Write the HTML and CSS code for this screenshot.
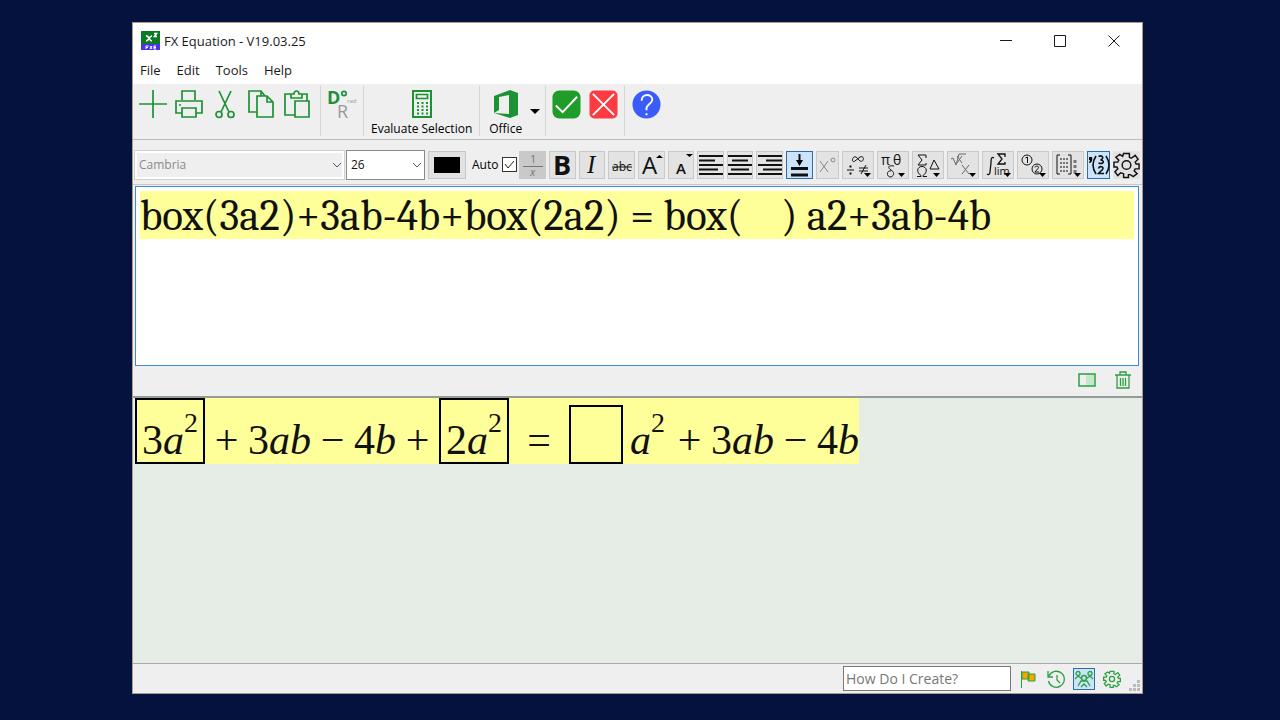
FILE: index.html
```
<!DOCTYPE html>
<html lang="en">
<head>
<meta charset="utf-8">
<title>FX Equation</title>
<link rel="stylesheet" href="styles.css">
</head>
<body>
<main class="window">
  <header class="titlebar">
    <svg class="app-icon" viewBox="0 0 19 19" aria-hidden="true"><rect width="19" height="14" fill="#0b7a24" stroke="none"/><rect y="13" width="19" height="6" fill="#4a35ee" stroke="none"/><g fill="none" stroke="#fff"><path stroke-width="1.600" d="M5 5c3-1 3 5 6 5M11 5c-3 0-3 5-6 5M13 2.500h2.500l-2 3h2.500"/><path d="M5 18v-3h2.500M5 16.500h2M9 15l2 3m0-3-2 3M15 15h-2v3h2M13 16.500h2"/></g></svg>
    <h1 class="title">FX Equation - V19.03.25</h1>
    <div class="window-controls">
      <button aria-label="Minimize"><svg viewBox="0 0 12 12"><path d="M0 5.500h12"/></svg></button>
      <button aria-label="Maximize"><svg viewBox="0 0 12 12"><path d="M.5.5h11v11H.5z"/></svg></button>
      <button aria-label="Close"><svg viewBox="0 0 12 12"><path d="m.5.5 11 11m0-11-11 11"/></svg></button>
    </div>
  </header>
  <nav class="menu"><button>File</button><button>Edit</button><button>Tools</button><button>Help</button></nav>

  <section class="toolbar" aria-label="Main toolbar">
    <div class="group files">
      <button aria-label="New"><svg class="icon" viewBox="0 0 28 28"><path d="M14 0v28M0 14h28"/></svg></button>
      <button aria-label="Print"><svg class="icon" viewBox="0 0 28 28"><path d="M7 10V1h13v9M7 23H1V11h26v12h-6M7 18h14v9H7z"/><path d="M4 15h2"/></svg></button>
      <button aria-label="Cut"><svg class="icon" viewBox="0 0 28 28"><path d="m8 1 10 21M20 1 10 22"/><circle cx="8" cy="24.500" r="3"/><circle cx="20" cy="24.500" r="3"/></svg></button>
      <button aria-label="Copy"><svg class="icon" viewBox="0 0 28 28"><path d="M10 22H2V1h12l4 5M10 6h10l6 6v15H10zM20 6v6h6M14 1v5"/></svg></button>
      <button aria-label="Paste"><svg class="icon" viewBox="0 0 28 28"><path d="M12 25H2V4h6M19 4h5v7M8 8V4h3c0-4 5-4 5 0h3v4zM12 11h14v16H12z"/></svg></button>
    </div>
    <div class="group"><button aria-label="Degrees or radians"><svg class="icon angle" viewBox="0 0 28 30"><text x="-1" y="14" font-size="18" font-weight="700">D</text><circle cx="16" cy="3.500" r="2.200"/><text x="9" y="28" font-size="18" class="grey">R</text><text x="19" y="13" font-size="6" class="grey">rad</text></svg></button></div>
    <div class="group"><button class="labelled"><svg class="icon" viewBox="0 0 28 28"><path stroke-width="2" d="M5 1h18v26H5z"/><path d="M8.500 4.500h11v4h-11z"/><path stroke-width="2" stroke-dasharray="2 2.500" d="M9 13h11M9 16.500h11M9 20h11M9 23.500h11"/></svg><span>Evaluate Selection</span></button></div>
    <div class="group office"><button class="labelled"><svg class="icon" viewBox="0 0 28 28"><path class="solid" d="M2 6 18 0l8 3v22l-8 3L2 23l15 1V5L7 7v13l-5 3z"/></svg><span>Office</span></button><button class="drop" aria-label="Office options"><svg viewBox="0 0 10 5"><path d="M0 0h10L5 5z"/></svg></button></div>
    <div class="group marks">
      <button aria-label="Accept"><svg class="badge" viewBox="0 0 30 30"><rect x=".5" y=".5" width="29" height="29" rx="7" fill="#209c2a" stroke="none"/><path d="m4 16 7 7L26 7"/></svg></button>
      <button aria-label="Cancel"><svg class="badge" viewBox="0 0 30 30"><rect x=".5" y=".5" width="29" height="29" rx="5" fill="#fc3b43" stroke="none"/><path d="m4 4 22 22M26 4 4 26"/></svg></button>
    </div>
    <div class="group"><button aria-label="Help"><svg class="badge" viewBox="0 0 30 30"><circle cx="15" cy="15" r="14.500" fill="#3c5cfa" stroke="none"/><path d="M10 11c0-8 11-7 11-1 0 4-6 5-6 9v2M15 24v2"/></svg></button></div>
  </section>

  <section class="format" aria-label="Format toolbar">
    <select class="font-name" aria-label="Font" disabled><option>Cambria</option></select>
    <select class="font-size" aria-label="Font size"><option>26</option></select>
    <button class="colour" aria-label="Text colour"><span></span></button>
    <label class="auto">Auto <input type="checkbox" checked></label>
    <div class="tools">
      <button class="pressed" aria-label="Fraction"><svg viewBox="0 0 26 28"><path d="M3 15.500h20"/><text x="10" y="12" font-size="11">1</text><text x="10" y="25" font-size="11" font-style="italic">x</text></svg></button>
      <button aria-label="Bold"><svg viewBox="0 0 26 28"><text x="4" y="24" font-size="27" font-weight="700">B</text></svg></button>
      <button aria-label="Italic"><svg viewBox="0 0 26 28"><text class="glyph-serif" x="8" y="22" font-size="25">I</text></svg></button>
      <button aria-label="Strikethrough"><svg viewBox="0 0 26 28"><text x="3" y="20" font-size="12">abc</text><path d="M3 16h20"/></svg></button>
      <button aria-label="Larger text"><svg viewBox="0 0 26 28"><text x="4" y="23" font-size="24">A</text><path class="fill" d="M18 7h7l-3.500-3z"/></svg></button>
      <button aria-label="Smaller text"><svg viewBox="0 0 26 28"><text x="8" y="23" font-size="15" font-weight="600">A</text><path class="fill" d="M18 3h7l-3.500 3z"/></svg></button>
      <button aria-label="Align left"><svg viewBox="0 0 26 28"><path class="bars" d="M1 5h24M1 9.500h16M1 14h24M1 18.500h19M1 23h24"/></svg></button>
      <button aria-label="Align centre"><svg viewBox="0 0 26 28"><path class="bars" d="M1 5h24M5 9.500h16M1 14h24M4 18.500h18M1 23h24"/></svg></button>
      <button aria-label="Align right"><svg viewBox="0 0 26 28"><path class="bars" d="M1 5h24M9 9.500h16M1 14h24M6 18.500h19M1 23h24"/></svg></button>
      <button class="active" aria-label="Baseline"><svg viewBox="0 0 26 28"><path class="heavy" d="M5 17.500h17M5 24h17"/><path stroke-width="2" d="M13.500 3v8"/><path class="fill" d="M10 9h7l-3.500 6z"/></svg></button>
      <button class="narrow" aria-label="Degree"><svg viewBox="0 0 22 28" class="faint"><path d="m4 10 8 11m0-11L4 21"/><circle cx="17" cy="9" r="2"/></svg></button>
      <button class="wide" aria-label="Operators"><svg viewBox="0 0 32 28"><path d="M16 8c-5-7-8 5-3 2l5-4c5-2 4 6 0 4zM5 19h7M17 17h9M17 20h9M24 14l-5 9"/><path stroke-width="2" d="M7.500 15.500h2M7.500 22.500h2"/><path class="fill" d="M22 22h7l-3.500 4z"/></svg></button>
      <button class="wide" aria-label="Greek lower case"><svg viewBox="0 0 32 28"><text x="4" y="14" font-size="14">π</text><text x="16" y="14" font-size="14">θ</text><path d="M17 15c-7-1-6 2-3 4 5 3 2 7-1 7-4-1-3-7 1-6"/><path class="fill" d="M21 22h7l-3.500 4z"/></svg></button>
      <button class="wide" aria-label="Greek upper case"><svg viewBox="0 0 32 28"><path d="M14 7V4H6l4 5-4 5h8v-2M5 25.500h4v-1c-5-3-4-9 1-9s6 6 1 9v1h4M22 9l-4 9h9z"/><path class="fill" d="M21 22h7l-3.500 4z"/></svg></button>
      <button class="wide" aria-label="Roots and powers"><svg viewBox="0 0 32 28" class="soft"><path d="m4 8 2-1 3 7 3-11h7M10 5l5 7m0-7-5 7M15 14l7 9m0-9-7 9"/><path class="fill" d="M22 22h7l-3.500 4z"/></svg></button>
      <button class="wide" aria-label="Calculus"><svg viewBox="0 0 32 28"><path stroke-width="1.300" d="M12 7c-3-2-3 2-3 5l-1 9c0 3-2 3-3 2M23 6V3h-7l4 5-4 5h7v-2"/><text x="12" y="24" font-size="11">lim</text><path class="fill" d="M22 22h7l-3.500 4z"/></svg></button>
      <button class="wide" aria-label="Numbering"><svg viewBox="0 0 32 28"><circle cx="10" cy="9" r="5"/><circle cx="20" cy="18" r="5"/><path d="m8.500 7 2-1v6M18 16.500c1-3 5-1 3 1l-3 3.500h4"/><path class="fill" d="M22 22h7l-3.500 4z"/></svg></button>
      <button class="wide" aria-label="Matrix"><svg viewBox="0 0 32 28"><path d="M8 4H5v19h3M16 4h3v19h-3"/><path stroke="#777" stroke-width="2" stroke-dasharray="2 2" d="M9 7v14M12 7v14M15 7v14"/><path stroke="#777" stroke-width="3" stroke-dasharray="3 2" d="M23 9v13"/><path class="fill" d="M22 22h7l-3.500 4z"/></svg></button>
      <button class="active narrow" aria-label="Inline notation"><svg viewBox="0 0 22 28"><path class="fill" d="M1 6h3c1 4-1 6-3 6l1-3H1z"/><path stroke-width="1.600" d="M8 5c-4 6-4 12 0 18M18 5c4 6 4 12 0 18"/><path stroke-width="1.600" d="M10.500 5.500c4-2 6 2 2 3.500 4 0 4 5-2 3M10.500 17.500c1-3 6-2 4 1l-4 4H16"/></svg></button>
      <button class="settings" aria-label="Settings"><svg viewBox="0 0 28 28"><path class="gear" d="M11 2h6v4l2 1 4-3 3 4-3 3 1 2h3v5h-4l-1 2 3 3-4 3-3-2h-2v3h-5v-4l-3-1-3 3-3-4 3-3-1-2H1v-5h4l1-2-3-3 4-3 3 2z"/><circle cx="14" cy="14" r="4.500" stroke-width="1.500"/></svg></button>
    </div>
  </section>

  <textarea class="editor" aria-label="Equation text" spellcheck="false">box(3a2)+3ab-4b+box(2a2) = box(    ) a2+3ab-4b</textarea>

  <div class="strip">
    <button aria-label="Toggle panel"><svg class="small" viewBox="0 0 18 18"><path fill="#c5e8c9" stroke="none" d="M8 3h8v12H8z"/><path stroke-width="1.500" d="M1 3h16v12H1z"/></svg></button>
    <button aria-label="Delete"><svg class="small" viewBox="0 0 18 18"><path stroke-width="1.300" d="M3 4h12v13H3zM1 4h16M6 4V1h6v3M6.500 7v8M9 7v8M11.500 7v8"/></svg></button>
  </div>

  <section class="output" aria-label="Equation">
    <div class="equation">
      <span class="box">3<i>a</i><sup>2</sup></span><span class="op">+</span><span>3<i>ab</i></span><span class="op">−</span><span>4<i>b</i></span><span class="op">+</span><span class="box">2<i>a</i><sup>2</sup></span><span class="op equals">=</span><span class="box empty"></span><span class="term"><i>a</i><sup>2</sup></span><span class="op">+</span><span>3<i>ab</i></span><span class="op">−</span><span>4<i>b</i></span>
    </div>
  </section>

  <footer class="status">
    <input class="search" type="text" placeholder="How Do I Create?" aria-label="How Do I Create?">
    <button aria-label="Flag"><svg class="small" viewBox="0 0 18 18"><path fill="#f6a800" d="M3 2h7v7H3zM9 4h7v7H9z"/><path d="M2.500 1v17"/></svg></button>
    <button aria-label="History"><svg class="small" viewBox="0 0 18 18"><path stroke-width="1.300" d="M2 6a8 8 0 1 1-.500 5M1 1v6h5M10 5v5l3 3"/></svg></button>
    <button class="active" aria-label="Community"><svg class="small" viewBox="0 0 18 18"><g stroke-width="1.300"><circle cx="9" cy="8" r="2.500"/><circle cx="3" cy="3.500" r="2"/><circle cx="15" cy="3.500" r="2"/><path d="m3 16 3-5h6l3 5M0 9l3-3 4 3M18 9l-3-3-4 3M6 17l3-3 3 3"/></g></svg></button>
    <button aria-label="Preferences"><svg class="small" viewBox="0 0 28 28"><path stroke-width="2" d="M11 2h6v4l2 1 4-3 3 4-3 3 1 2h3v5h-4l-1 2 3 3-4 3-3-2h-2v3h-5v-4l-3-1-3 3-3-4 3-3-1-2H1v-5h4l1-2-3-3 4-3 3 2z"/><circle cx="14" cy="14" r="4" stroke-width="2"/></svg></button>
    <svg class="grip" viewBox="0 0 11 11" aria-hidden="true"><path d="M8 0h3v3H8zM4 4h3v3H4zM8 4h3v3H8zM0 8h3v3H0zM4 8h3v3H4zM8 8h3v3H8z"/></svg>
  </footer>
</main>
</body>
</html>
```
FILE: styles.css
```
* { box-sizing: border-box; }
body {
  margin: 0;
  min-height: 100vh;
  display: flex;
  padding: 22px 137px 26px 132px;
  background: #06123e;
  color: #1a1a1a;
  font-family: "Open Sans", "Noto Sans", sans-serif;
  font-size: 13px;
}
button {
  margin: 0;
  padding: 0;
  border: 0;
  background: none;
  color: inherit;
  font: inherit;
}
svg { display: block; fill: none; stroke: currentColor; overflow: visible; }
svg text { fill: currentColor; stroke: none; }
svg .grey { fill: #999; }
.glyph-serif { font-family: "Liberation Serif", serif; font-style: italic; }

.window {
  flex: 1;
  display: flex;
  flex-direction: column;
  min-width: 0;
  border: 1px solid #a99b87;
  background: #efefef;
}
.titlebar {
  display: flex;
  align-items: center;
  height: 35px;
  padding: 0 1px 0 8px;
  background: #fff;
}
.app-icon { width: 19px; height: 19px; }
.title { flex: 1; margin: 0 0 0 4px; font-size: 13px; font-weight: 400; }
.window-controls { display: flex; }
.window-controls button { width: 54px; height: 34px; display: grid; place-items: center; }
.window-controls svg { width: 12px; height: 12px; }

.menu {
  display: flex;
  gap: 16px;
  height: 26px;
  padding: 0 7px 2px;
  background: #fff;
}

.toolbar {
  display: flex;
  height: 56px;
  padding-top: 2px;
  border-bottom: 1px solid #bcbcbc;
}
.group {
  display: flex;
  align-items: flex-start;
  height: 50px;
  padding: 4px 7px 0;
  border-left: 1px solid #d4d4d4;
}
.group.files { gap: 8px; padding: 4px 9px 0 6px; border-left: 0; }
.group.office { padding: 4px 5px 0 9px; }
.group.marks { gap: 8px; padding: 4px 6px 0; }
.icon { width: 28px; height: 28px; color: #1d9136; stroke-width: 1.700; }
.icon .solid { fill: currentColor; stroke: none; }
.icon.angle { width: 28px; height: 30px; }
.labelled {
  display: flex;
  flex-direction: column;
  align-items: center;
  gap: 3px;
  color: #000;
  font-size: 12px;
  line-height: 16px;
}
.drop { padding: 19px 0 0 8px; }
.drop svg { width: 10px; height: 5px; fill: #000; stroke: none; }
.badge { width: 29px; height: 29px; color: #fff; stroke-width: 2; }

.format {
  display: flex;
  align-items: center;
  height: 45px;
  padding: 5px 2px 0 1px;
  border-bottom: 1px solid #c8c8c8;
}
select {
  appearance: none;
  height: 30px;
  padding: 0 4px;
  border: 1px solid #8a8a8a;
  border-radius: 0;
  color: #111;
  font: 12px "Open Sans", sans-serif;
  background: #fff url("data:image/svg+xml,%3Csvg xmlns='http://www.w3.org/2000/svg' viewBox='0 0 10 6'%3E%3Cpath d='m1 1 4 4 4-4' fill='none' stroke='%23555'/%3E%3C/svg%3E") right 2px center / 10px 6px no-repeat;
}
.font-name {
  width: 211px;
  opacity: 1;
  border-color: #d0d0d0;
  color: #8b8b8b;
  box-shadow: inset 0 0 0 2px #fff;
  background-color: #efefef;
}
.font-size { width: 79px; margin-left: 1px; }
.colour {
  display: grid;
  place-items: center;
  width: 38px;
  height: 28px;
  margin: 0 6px 0 3px;
  border: 1px solid #c6c6c6;
  background: #e2e2e2;
}
.colour span { width: 26px; height: 16px; background: #000; }
.auto { display: flex; align-items: center; gap: 4px; font-size: 12px; color: #000; }
.auto input {
  appearance: none;
  width: 15px;
  height: 15px;
  margin: 0;
  border: 1px solid #333;
  background: #fff url("data:image/svg+xml,%3Csvg xmlns='http://www.w3.org/2000/svg' viewBox='0 0 13 13'%3E%3Cpath d='m2 6 3 4 6-7' fill='none' stroke='%23222'/%3E%3C/svg%3E");
}
.tools { flex: 1; display: flex; gap: 3px; margin-left: 2px; min-width: 0; }
.tools button {
  flex: 27 1 0;
  display: flex;
  align-items: center;
  justify-content: center;
  min-width: 0;
  height: 28px;
  border: 1px solid #c9c9c9;
  background: #e3e3e3;
  color: #111;
}
.tools svg { flex: none; width: 26px; height: 28px; }
.tools .narrow { flex-grow: 23; }
.tools .narrow svg { width: 22px; }
.tools .wide { flex-grow: 33; }
.tools .wide svg { width: 32px; }
.tools .settings svg { width: 27px; }
.tools .pressed { background: #c9c9c9; border-color: #c9c9c9; color: #777; }
.tools .active { background: #cce4fa; border-color: #2d6da9; }
.tools .settings { border-color: #e3e3e3; }
.tools .bars { stroke-width: 2; }
.tools .heavy { stroke-width: 3; }
.tools .gear { stroke-width: 1.500; }
.fill { fill: #000; stroke: none; }
.faint { color: #888; }
.soft { color: #666; }

.editor {
  display: block;
  height: 180px;
  margin: 1px 3px 0 2px;
  padding: 4px;
  border: 1px solid #3b8ecb;
  border-radius: 0;
  outline: 0;
  resize: none;
  overflow: hidden;
  color: #111;
  font: 43px/50px Cambria, Caladea, "Liberation Serif", serif;
  background: linear-gradient(#ffff99, #ffff99) content-box 0 0 / 100% 48px no-repeat, #fff;
}
.strip {
  display: flex;
  justify-content: flex-end;
  align-items: center;
  gap: 18px;
  height: 30px;
  padding: 0 10px 2px 0;
}
.small { width: 18px; height: 18px; color: #2ba043; }

.output {
  flex: 1;
  border-top: 2px solid #949c98;
  border-bottom: 1px solid #a8aaa8;
  background: #e6ede6;
  overflow: hidden;
}
.equation {
  display: inline-flex;
  align-items: flex-end;
  height: 66px;
  margin-left: 2px;
  background: #ffff99;
  color: #111;
  font: 42px/48px "Liberation Serif", serif;
  white-space: nowrap;
}
.equation sup { font-size: 28px; line-height: 0; vertical-align: 22px; }
.box { height: 66px; padding: 16px 5px 0; border: 2px solid #000; }
.box.empty { width: 54px; height: 59px; }
.op { width: 43px; text-align: center; }
.op.equals { width: 60px; }
.term { padding: 0 3px 0 7px; }

.status {
  display: flex;
  align-items: center;
  justify-content: flex-end;
  gap: 6px;
  height: 29px;
  padding-right: 2px;
}
.search {
  width: 168px;
  height: 25px;
  padding: 0 2px;
  border: 1px solid #777;
  background: #fff;
  font: 14px "Open Sans", sans-serif;
}
.search::placeholder { color: #777; }
.status button { display: grid; place-items: center; width: 22px; height: 22px; }
.status .active { border: 1px solid #2d6da9; background: #cce4fa; }
.grip { align-self: flex-end; width: 11px; height: 11px; margin-bottom: 2px; fill: #bbb; stroke: none; }
```
